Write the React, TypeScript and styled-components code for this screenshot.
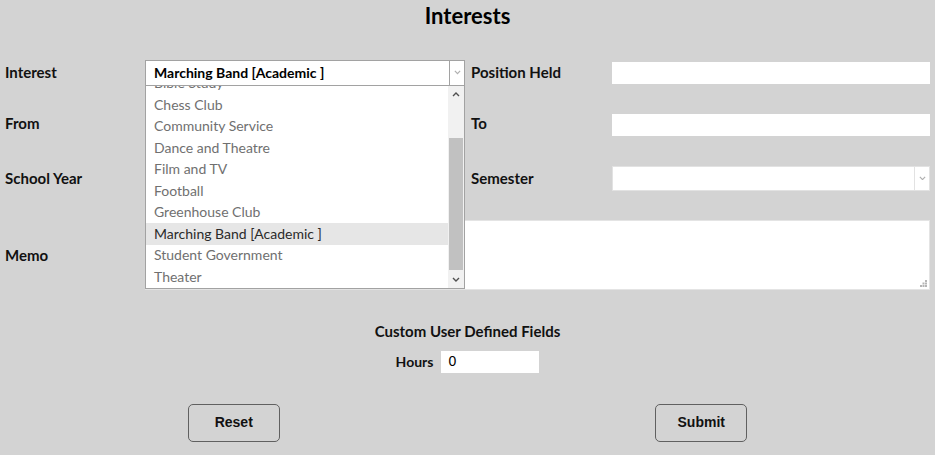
import React from "react";
import styled, { createGlobalStyle } from "styled-components";

const Global = createGlobalStyle`
  html, body { margin: 0; padding: 0; background: #d3d3d3; }
  body { font-family: "Lato", "DejaVu Sans", sans-serif; color: #000; }
  * { box-sizing: border-box; }
`;

const Page = styled.div`
  width: 935px;
  height: 455px;
  background: #d3d3d3;
  display: flex;
  flex-direction: column;
`;

const Title = styled.h1`
  margin: 0;
  height: 47px;
  padding-top: 3px;
  text-align: center;
  font: 700 22px/26px "Lato", sans-serif;
`;

const FormGrid = styled.div`
  display: grid;
  grid-template-columns: 140px 320px 147px 1fr;
  grid-template-rows: 51px 53px 54px 100px;
  padding: 0 5px;
  align-items: center;
`;

const Label = styled.label<{ $right?: boolean; $raise?: number }>`
  font: 700 15px/18px "Lato", sans-serif;
  padding-left: ${(p) => (p.$right ? "6px" : "0")};
  margin-top: ${(p) => (p.$raise ? `-${p.$raise}px` : "0")};
  color: #111;
`;

const TextBox = styled.div`
  height: 22px;
  background: #fff;
`;

const SelectBox = styled.div<{ $open?: boolean }>`
  position: relative;
  height: ${(p) => (p.$open ? "26px" : "25px")};
  background: #fff;
  border: 1px solid ${(p) => (p.$open ? "#a2a2a2" : "#e2e2e2")};
  display: flex;
  align-items: center;
`;

const SelectValue = styled.div`
  flex: 1;
  padding-left: 8px;
  font: 700 14px/18px "Lato", sans-serif;
  color: #000;
`;

const ArrowCell = styled.div<{ $open?: boolean }>`
  width: 15px;
  align-self: stretch;
  border-left: 1px solid ${(p) => (p.$open ? "#a2a2a2" : "#e2e2e2")};
  display: flex;
  align-items: center;
  justify-content: center;
`;

const Dropdown = styled.div`
  position: absolute;
  top: 100%;
  left: -1px;
  right: -1px;
  height: 204px;
  background: #fff;
  border: 1px solid #a2a2a2;
  display: flex;
  z-index: 5;
`;

const List = styled.ul`
  flex: 1;
  margin: 0;
  padding: 0;
  list-style: none;
  overflow: hidden;
`;

const Items = styled.div`
  margin-top: -13px;
`;

const Item = styled.li<{ $active?: boolean }>`
  height: 21.5px;
  padding-left: 8px;
  display: flex;
  align-items: center;
  font: 400 14px/18px "Lato", sans-serif;
  color: ${(p) => (p.$active ? "#2a2a2a" : "#707070")};
  background: ${(p) => (p.$active ? "#e6e6e6" : "transparent")};
`;

const Scrollbar = styled.div`
  width: 16px;
  background: #f1f1f1;
  display: flex;
  flex-direction: column;
`;

const ScrollBtn = styled.div`
  height: 17px;
  display: flex;
  align-items: center;
  justify-content: center;
`;

const Track = styled.div`
  flex: 1;
  display: flex;
  padding: 35px 1px 1px 1px;
`;

const Thumb = styled.div`
  flex: 1;
  background: #c1c1c1;
`;

const MemoBox = styled.div`
  grid-column: 2 / 5;
  position: relative;
  height: 70px;
  background: #fff;
  border: 1px solid #e4e4e4;
`;

const Grip = styled.svg`
  position: absolute;
  right: 2px;
  bottom: 2px;
`;

const Custom = styled.div`
  margin-top: 16px;
  display: flex;
  flex-direction: column;
  align-items: center;
`;

const CustomTitle = styled.div`
  font: 700 15px/20px "Lato", sans-serif;
  color: #111;
`;

const HoursRow = styled.div`
  margin-top: 10px;
  display: flex;
  align-items: center;
  gap: 8px;
`;

const HoursLabel = styled.span`
  font: 700 14px/18px "Lato", sans-serif;
  color: #111;
`;

const HoursInput = styled.div`
  width: 98px;
  height: 22px;
  background: #fff;
  padding-left: 7px;
  font: 400 14px/21px "Liberation Sans", Arial, sans-serif;
  color: #000;
`;

const Buttons = styled.div`
  margin-top: 31px;
  display: grid;
  grid-template-columns: 1fr 1fr;
  justify-items: center;
`;

const Button = styled.button`
  width: 92px;
  height: 38px;
  background: transparent;
  border: 1px solid #606060;
  border-radius: 5px;
  font: 700 14px "Liberation Sans", Arial, sans-serif;
  color: #111;
  padding: 0 0 2px 0;
`;

const Chevron = ({ dir, color, w = 8 }: { dir: "up" | "down"; color: string; w?: number }) => (
  <svg width={w} height={w / 2 + 1} viewBox="0 0 8 5">
    {dir === "down" ? (
      <path d="M1 1 L4 4 L7 1" fill="none" stroke={color} strokeWidth="1.4" />
    ) : (
      <path d="M1 4 L4 1 L7 4" fill="none" stroke={color} strokeWidth="1.4" />
    )}
  </svg>
);

const interests = [
  "Bible Study",
  "Chess Club",
  "Community Service",
  "Dance and Theatre",
  "Film and TV",
  "Football",
  "Greenhouse Club",
  "Marching Band [Academic ]",
  "Student Government",
  "Theater",
];

export default function App() {
  return (
    <Page>
      <Global />
      <Title>Interests</Title>
      <FormGrid>
        <Label $raise={1}>Interest</Label>
        <SelectBox $open>
          <SelectValue>Marching Band [Academic ]</SelectValue>
          <ArrowCell $open>
            <Chevron dir="down" color="#b0b0b0" w={7} />
          </ArrowCell>
          <Dropdown>
            <List>
              <Items>
                {interests.map((i) => (
                  <Item key={i} $active={i.startsWith("Marching")}>
                    {i}
                  </Item>
                ))}
              </Items>
            </List>
            <Scrollbar>
              <ScrollBtn>
                <Chevron dir="up" color="#505050" />
              </ScrollBtn>
              <Track>
                <Thumb />
              </Track>
              <ScrollBtn>
                <Chevron dir="down" color="#505050" />
              </ScrollBtn>
            </Scrollbar>
          </Dropdown>
        </SelectBox>
        <Label $right $raise={1}>Position Held</Label>
        <TextBox />

        <Label $raise={4}>From</Label>
        <TextBox />
        <Label $right $raise={4}>To</Label>
        <TextBox />

        <Label>School Year</Label>
        <TextBox />
        <Label $right>Semester</Label>
        <SelectBox>
          <SelectValue />
          <ArrowCell>
            <Chevron dir="down" color="#b0b0b0" w={7} />
          </ArrowCell>
        </SelectBox>

        <Label>Memo</Label>
        <MemoBox>
          <Grip width="7" height="7" viewBox="0 0 7 7">
            <rect x="5" y="0" width="2" height="2" fill="#b5b5b5" />
            <rect x="2.5" y="2.5" width="2" height="2" fill="#b5b5b5" />
            <rect x="5" y="2.5" width="2" height="2" fill="#b5b5b5" />
            <rect x="0" y="5" width="2" height="2" fill="#b5b5b5" />
            <rect x="2.5" y="5" width="2" height="2" fill="#b5b5b5" />
            <rect x="5" y="5" width="2" height="2" fill="#b5b5b5" />
          </Grip>
        </MemoBox>
      </FormGrid>
      <Custom>
        <CustomTitle>Custom User Defined Fields</CustomTitle>
        <HoursRow>
          <HoursLabel>Hours</HoursLabel>
          <HoursInput>0</HoursInput>
        </HoursRow>
      </Custom>
      <Buttons>
        <Button>Reset</Button>
        <Button>Submit</Button>
      </Buttons>
    </Page>
  );
}
